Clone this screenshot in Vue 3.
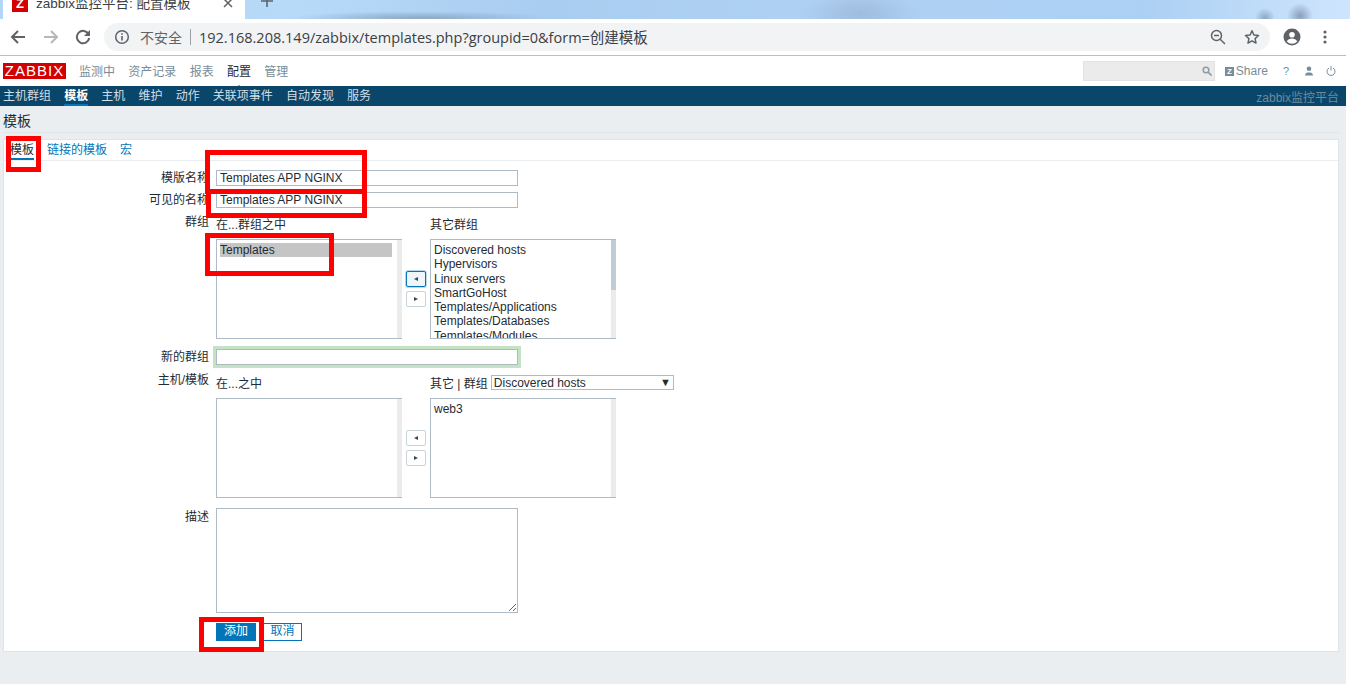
<template>
  <div class="screen">
    <div class="tabstrip">
      <div class="browser-tab">
        <span class="favicon">Z</span>
        <span class="tab-title">zabbix监控平台: 配置模板</span>
        <svg class="tab-close" width="10" height="10" viewBox="0 0 10 10"><path d="M1 1l8 8M9 1l-8 8" stroke="#5f6368" stroke-width="1.5" /></svg>
      </div>
      <svg class="tab-new" width="12" height="12" viewBox="0 0 12 12"><path d="M6 0v12M0 6h12" stroke="#5f6368" stroke-width="1.6" /></svg>
    </div>

    <div class="toolbar">
      <div class="tool-btns">
        <svg width="16" height="16" viewBox="0 0 16 16"><path d="M15 8H2.5M8 2L2 8l6 6" fill="none" stroke="#5f6368" stroke-width="2" /></svg>
        <svg width="16" height="16" viewBox="0 0 16 16"><path d="M1 8h12.5M8 2l6 6-6 6" fill="none" stroke="#b4b7ba" stroke-width="2" /></svg>
        <svg width="16" height="16" viewBox="0 0 16 16"><path d="M13.6 5.2A6.2 6.2 0 1 0 14.2 9" fill="none" stroke="#5f6368" stroke-width="2" /><path d="M15 1v6H9z" fill="#5f6368" /></svg>
      </div>
      <div class="omnibox">
        <svg class="info" width="16" height="16" viewBox="0 0 16 16"><circle cx="8" cy="8" r="6.3" fill="none" stroke="#5f6368" stroke-width="1.5" /><path d="M8 7v4.5M8 4.2v1.6" stroke="#5f6368" stroke-width="1.6" /></svg>
        <span class="insecure">不安全</span>
        <span class="omni-sep"></span>
        <span class="url">192.168.208.149/zabbix/templates.php?groupid=0&amp;form=创建模板</span>
        <svg class="zoom-icon" width="16" height="16" viewBox="0 0 16 16"><circle cx="6.5" cy="6.5" r="5" fill="none" stroke="#5f6368" stroke-width="1.5" /><path d="M10.2 10.2L15 15M4 6.5h5" stroke="#5f6368" stroke-width="1.5" /></svg>
        <svg class="star" width="16" height="16" viewBox="0 0 16 16"><path d="M8 1.8l1.9 4.2 4.6.5-3.4 3.1.9 4.5-4-2.3-4 2.3.9-4.5L1.5 6.5l4.6-.5z" fill="none" stroke="#5f6368" stroke-width="1.5" stroke-linejoin="round" /></svg>
      </div>
      <svg class="avatar" width="18" height="18" viewBox="0 0 18 18"><circle cx="9" cy="9" r="8.5" fill="#5f6368" /><circle cx="9" cy="6.8" r="2.8" fill="#fff" /><path d="M3.8 13.4c1-2 3.2-2.8 5.2-2.8s4.200.8 5.200 2.800A6.800 6.800 0 0 1 9 15.800a6.800 6.800 0 0 1-5.200-2.400z" fill="#fff" /></svg>
      <svg class="dots" width="4" height="14" viewBox="0 0 4 14"><circle cx="2" cy="2" r="1.600" fill="#5f6368" /><circle cx="2" cy="7" r="1.600" fill="#5f6368" /><circle cx="2" cy="12" r="1.600" fill="#5f6368" /></svg>
    </div>

    <div class="page">
      <header class="top-nav">
        <div class="logo">ZABBIX</div>
        <nav class="main-menu">
          <a v-for="item in mainMenu" :key="item" :class="{ active: item === '配置' }">{{ item }}</a>
        </nav>
        <div class="top-right">
          <div class="search">
            <svg width="10" height="10" viewBox="0 0 10 10"><circle cx="4" cy="4" r="2.800" fill="none" stroke="#8c9ba5" stroke-width="1.500" /><path d="M6 6l3.500 3.500" stroke="#8c9ba5" stroke-width="1.700" /></svg>
          </div>
          <span class="share"><i>Z</i>Share</span>
          <span class="help">?</span>
          <svg class="user" width="10" height="10" viewBox="0 0 10 10"><circle cx="5" cy="2.700" r="2.300" fill="#768d99" /><path d="M1 9.500c0-2.500 2-3 4-3s4 .5 4 3z" fill="#768d99" /></svg>
          <svg class="power" width="10" height="10" viewBox="0 0 10 10"><path d="M3 2a4 4 0 1 0 4 0" fill="none" stroke="#768d99" /><path d="M5 0v4.500" stroke="#768d99" /></svg>
        </div>
      </header>

      <nav class="sub-menu">
        <a v-for="item in subMenu" :key="item" :class="{ active: item === '模板' }">{{ item }}</a>
        <span class="server-name">zabbix监控平台</span>
      </nav>

      <main class="content">
        <h1>模板</h1>
        <section class="panel">
          <div class="tabs">
            <a class="active">模板</a>
            <a>链接的模板</a>
            <a>宏</a>
          </div>

          <form class="form-grid">
            <label class="row-1">模版名称</label>
            <input class="text-input row-1" value="Templates APP NGINX" />

            <label class="row-2">可见的名称</label>
            <input class="text-input row-2" value="Templates APP NGINX" />

            <label class="row-3">群组</label>
            <div class="twin">
              <div class="twin-col">
                <div class="twin-head">在...群组之中</div>
                <div class="listbox">
                  <div class="list-items">
                    <div class="selected">Templates</div>
                  </div>
                  <div class="track"></div>
                </div>
              </div>
              <div class="mover">
                <button type="button" class="focused"><span class="tri-left"></span></button>
                <button type="button"><span class="tri-right"></span></button>
              </div>
              <div class="twin-col">
                <div class="twin-head">其它群组</div>
                <div class="listbox">
                  <div class="list-items">
                    <div v-for="g in otherGroups" :key="g">{{ g }}</div>
                  </div>
                  <div class="track"><div class="thumb"></div></div>
                </div>
              </div>
            </div>

            <label class="row-4">新的群组</label>
            <input class="text-input new-group row-4" />

            <label class="row-5">主机/模板</label>
            <div class="twin hosts">
              <div class="twin-col">
                <div class="twin-head">在...之中</div>
                <div class="listbox">
                  <div class="list-items"></div>
                  <div class="track"></div>
                </div>
              </div>
              <div class="mover">
                <button type="button"><span class="tri-left"></span></button>
                <button type="button"><span class="tri-right"></span></button>
              </div>
              <div class="twin-col">
                <div class="twin-head with-select">
                  其它 | 群组
                  <div class="select-box">Discovered hosts<span class="caret">▼</span></div>
                </div>
                <div class="listbox">
                  <div class="list-items"><div>web3</div></div>
                  <div class="track"></div>
                </div>
              </div>
            </div>

            <label class="row-6">描述</label>
            <textarea class="desc"></textarea>

            <div class="actions">
              <button type="button" class="btn-add">添加</button>
              <button type="button" class="btn-cancel">取消</button>
            </div>
          </form>
        </section>
      </main>
    </div>

    <!-- annotations drawn over the screenshot -->
    <div class="mark m-tab"></div>
    <div class="mark m-name"></div>
    <div class="mark m-visible"></div>
    <div class="mark m-group"></div>
    <div class="mark m-add"></div>
  </div>
</template>

<script setup>
const mainMenu = ["监测中", "资产记录", "报表", "配置", "管理"];
const subMenu = ["主机群组", "模板", "主机", "维护", "动作", "关联项事件", "自动发现", "服务"];
const otherGroups = [
  "Discovered hosts",
  "Hypervisors",
  "Linux servers",
  "SmartGoHost",
  "Templates/Applications",
  "Templates/Databases",
  "Templates/Modules",
];
</script>

<style>
html,
body {
  margin: 0;
  background: #fff;
}
</style>

<style scoped>
.screen {
  position: relative;
  width: 1350px;
  height: 684px;
  overflow: hidden;
  background: #fff;
  font-family: "Liberation Sans", "Noto Sans CJK SC", sans-serif;
  font-size: 12px;
  color: #1f2c33;
}
a {
  text-decoration: none;
}

/* browser chrome */
.tabstrip {
  height: 19px;
  display: flex;
  align-items: flex-end;
  background:
    radial-gradient(circle at 1265px 18px, #8fa6c0 0, rgba(143, 166, 192, 0) 10px),
    radial-gradient(circle at 1300px 16px, #8b9fb8 0, rgba(139, 159, 184, 0) 13px),
    radial-gradient(ellipse 130px 7px at 420px 18px, #8da9c6 0, rgba(141, 169, 198, 0) 100%),
    radial-gradient(ellipse 60px 24px at 860px 14px, #9fbcdc 0, rgba(159, 188, 220, 0) 100%),
    linear-gradient(90deg, #b4d6f6 0%, #b8daf9 22%, #a9cdf0 40%, #aed1f3 60%, #acd0f3 85%, #cfe5fd 100%);
}
.browser-tab {
  width: 242px;
  height: 19px;
  margin-left: 3px;
  background: #fff;
  display: flex;
  align-items: center;
  padding-left: 9px;
  box-sizing: border-box;
  position: relative;
  overflow: hidden;
}
.favicon {
  width: 16px;
  height: 16px;
  margin-top: -11px;
  background: #d40000;
  color: #fff;
  font-weight: 700;
  font-size: 13px;
  line-height: 16px;
  text-align: center;
  flex: none;
}
.tab-title {
  margin-left: 8px;
  margin-top: -16px;
  font-size: 13.500px;
  color: #3c4043;
  white-space: nowrap;
}
.tab-close {
  margin-left: auto;
  margin-right: 12px;
  margin-top: -14px;
}
.tab-new {
  margin-left: 16px;
  margin-bottom: 12px;
}
.toolbar {
  width: 1346px;
  height: 37px;
  box-sizing: border-box;
  border-bottom: 1px solid #bdbdbd;
  display: flex;
  align-items: center;
  padding-left: 10px;
}
.tool-btns {
  display: flex;
  gap: 16.500px;
  align-items: center;
}
.omnibox {
  width: 1166px;
  height: 28px;
  margin-left: 13px;
  background: #f1f3f4;
  border-radius: 14px;
  display: flex;
  align-items: center;
  padding-left: 10px;
  box-sizing: border-box;
}
.insecure {
  margin-left: 10px;
  font-size: 14px;
  color: #5f6368;
}
.omni-sep {
  width: 1px;
  height: 16px;
  background: #9aa0a6;
  margin: 0 8px;
}
.url {
  font-family: "Open Sans", "Noto Sans CJK SC", sans-serif;
  font-size: 14.500px;
  color: #3c4043;
  white-space: nowrap;
  margin-top: -2px;
}
.zoom-icon {
  margin-left: auto;
}
.star {
  margin-left: 18px;
  margin-right: 10px;
}
.avatar {
  margin-left: 13px;
}
.dots {
  margin-left: 22px;
}

/* zabbix page */
.page {
  width: 1346px;
  height: 628px;
  background: #ebeef0;
}
.top-nav {
  height: 30px;
  background: #fff;
  display: flex;
  align-items: center;
  padding-left: 3px;
}
.logo {
  width: 63px;
  height: 16px;
  background: #d40000;
  color: #fff;
  font-size: 15px;
  line-height: 16px;
  text-align: center;
  letter-spacing: 1px;
}
.main-menu {
  display: flex;
  gap: 13.300px;
  margin-left: 13px;
  margin-top: -2px;
}
.main-menu a {
  color: #768d99;
  position: relative;
}
.main-menu a.active {
  color: #1f2c33;
}
.main-menu a.active::after {
  content: "";
  position: absolute;
  left: 9px;
  bottom: -9px;
  border: 3px solid transparent;
  border-top: 0;
  border-bottom-color: #0a466a;
}
.top-right {
  margin-left: auto;
  display: flex;
  align-items: center;
  color: #768d99;
}
.search {
  width: 132px;
  height: 20px;
  box-sizing: border-box;
  background: #ebebeb;
  border: 1px solid #e3e3e3;
  display: flex;
  align-items: center;
  justify-content: flex-end;
  padding-right: 2px;
}
.share {
  margin-left: 10px;
  display: flex;
  align-items: center;
}
.share i {
  width: 9px;
  height: 9px;
  background: #768d99;
  color: #fff;
  font-size: 8px;
  font-style: normal;
  font-weight: 700;
  line-height: 9px;
  text-align: center;
  margin-right: 2px;
}
.help {
  margin-left: 15px;
  font-size: 11px;
}
.user {
  margin-left: 15px;
}
.power {
  margin-left: 12px;
  margin-right: 10px;
}
.sub-menu {
  height: 20px;
  background: #0a466a;
  display: flex;
  align-items: center;
  gap: 13.150px;
  padding: 0 7px 0 3px;
}
.sub-menu a {
  color: #d5dee4;
  line-height: 20px;
  height: 20px;
  box-sizing: border-box;
}
.sub-menu a.active {
  color: #fff;
  font-weight: 700;
  border-bottom: 2px solid #0275b8;
}
.server-name {
  margin-left: auto;
  color: #6a8ba0;
}
.content {
  padding: 0 7px 0 3px;
}
h1 {
  margin: 0;
  height: 26px;
  line-height: 30px;
  font-size: 14px;
  font-weight: 400;
  border-bottom: 1px solid #dfe4e7;
}
.panel {
  margin-top: 6px;
  height: 513px;
  box-sizing: border-box;
  background: #fff;
  border: 1px solid #dfe4e7;
}
.tabs {
  height: 21px;
  box-sizing: border-box;
  border-bottom: 1px solid #ebeef0;
  display: flex;
  gap: 13px;
  padding-left: 6px;
}
.tabs a {
  color: #0275b8;
  line-height: 21px;
  height: 20px;
  box-sizing: border-box;
}
.tabs a.active {
  color: #1f2c33;
  border-bottom: 2px solid #0275b8;
}

.form-grid {
  display: grid;
  grid-template-columns: 205px 1fr;
  column-gap: 7px;
  padding-top: 9px;
}
label {
  text-align: right;
  line-height: 17px;
}
.text-input {
  width: 302px;
  height: 16px;
  box-sizing: border-box;
  border: 1px solid #acbbc5;
  padding: 0 3px;
  margin: 0;
  font: inherit;
  color: #1f2c33;
  outline: none;
}
input.row-1 {
  margin-bottom: 6px;
}
input.row-2 {
  margin-bottom: 8px;
}
.twin {
  display: flex;
}
.twin-col {
  width: 186px;
}
.twin-head {
  height: 23px;
  line-height: 19px;
}
.listbox {
  height: 100px;
  box-sizing: border-box;
  border: 1px solid #acbbc5;
  border-right: 0;
  display: flex;
  overflow: hidden;
}
.list-items {
  flex: 1;
  padding: 3px 5px 0 3px;
  line-height: 14.300px;
  overflow: hidden;
  white-space: nowrap;
}
.selected {
  background: #c5c5c5;
}
.track {
  width: 5px;
  background: #ebebeb;
  flex: none;
}
.thumb {
  height: 50px;
  background: #c0ccd5;
}
.mover {
  width: 28px;
  display: flex;
  flex-direction: column;
  align-items: center;
  gap: 4px;
  padding-top: 55px;
}
button {
  font: inherit;
  padding: 0;
  margin: 0;
  cursor: pointer;
}
.mover button {
  width: 20px;
  height: 16px;
  background: #fff;
  border: 1px solid #c9d3da;
  border-radius: 2px;
  display: flex;
  align-items: center;
  justify-content: center;
}
.mover button.focused {
  background: #eef5fb;
  border-color: #0275b8;
  box-shadow: 0 0 0 1px #b9d9ef;
}
.tri-left,
.tri-right {
  width: 0;
  height: 0;
  border: 2.500px solid transparent;
}
.tri-left {
  border-left: 0;
  border-right: 4px solid #3a4a54;
}
.tri-right {
  border-right: 0;
  border-left: 4px solid #3a4a54;
}
input.row-4 {
  margin: 10px 0;
}
label.row-4 {
  padding-top: 11px;
  line-height: 15px;
}
.new-group {
  outline: 3px solid #c5e2c5;
  outline-offset: 0;
}
label.row-3 {
  line-height: 13px;
}
label.row-5 {
  line-height: 11px;
}
.with-select {
  display: flex;
  gap: 3px;
  align-items: flex-start;
  white-space: nowrap;
}
.select-box {
  flex: none;
  width: 183px;
  height: 15px;
  box-sizing: border-box;
  border: 1px solid #acbbc5;
  padding-left: 2px;
  line-height: 14px;
  position: relative;
}
.caret {
  position: absolute;
  right: 2px;
  top: -1px;
  font-size: 11px;
  color: #1f2c33;
}
.desc {
  display: block;
  width: 302px;
  height: 105px;
  box-sizing: border-box;
  border: 1px solid #acbbc5;
  margin: 10px 0 0;
  padding: 0;
  outline: none;
}
label.row-6 {
  padding-top: 11px;
}
.actions {
  grid-column: 2;
  display: flex;
  gap: 7px;
  margin-top: 10px;
}
.actions button {
  height: 18px;
  box-sizing: border-box;
  border: 1px solid #0275b8;
  line-height: 14px;
  padding-bottom: 2px;
}
.btn-add {
  width: 40px;
  background: #0275b8;
  color: #fff;
}
.btn-cancel {
  width: 39px;
  background: #fff;
  color: #0275b8;
}

/* red annotation boxes */
.mark {
  position: absolute;
  box-sizing: border-box;
  border: 5px solid #f00;
}
.m-tab {
  left: 6px;
  top: 136px;
  width: 35px;
  height: 36px;
}
.m-name {
  left: 205px;
  top: 150px;
  width: 162px;
  height: 44px;
}
.m-visible {
  left: 206px;
  top: 189px;
  width: 161px;
  height: 29px;
}
.m-group {
  left: 205px;
  top: 233px;
  width: 129px;
  height: 43px;
}
.m-add {
  left: 199px;
  top: 617px;
  width: 65px;
  height: 35px;
}
</style>
